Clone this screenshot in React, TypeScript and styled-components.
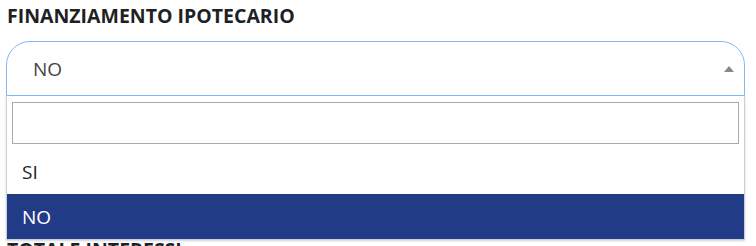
import React from 'react';
import styled, { createGlobalStyle } from 'styled-components';

const GlobalStyle = createGlobalStyle`
  body {
    margin: 0;
    background: #ffffff;
    font-family: 'Open Sans', 'Noto Sans', sans-serif;
    overflow: hidden;
  }
`;

const Page = styled.div`
  padding: 4px 11px 0 6px;
`;

const Field = styled.div<{ $gap?: number }>`
  position: relative;
  margin-bottom: ${(p) => p.$gap ?? 0}px;
`;

const Label = styled.div`
  font-size: 19.5px;
  font-weight: 700;
  line-height: 24px;
  color: #1f1f24;
  padding-left: 1px;
  margin-bottom: 13px;
`;

const SelectBox = styled.div`
  position: relative;
  height: 55px;
  box-sizing: border-box;
  border: 1px solid #7fbaf5;
  border-radius: 24px 24px 0 0;
  display: flex;
  align-items: center;
  padding-left: 26px;
  font-size: 19px;
  color: #444;
`;

const Arrow = styled.span`
  position: absolute;
  right: 10px;
  top: 50%;
  margin-top: -3px;
  width: 0;
  height: 0;
  border-left: 5px solid transparent;
  border-right: 5px solid transparent;
  border-bottom: 6px solid #888;
`;

const Dropdown = styled.div`
  position: absolute;
  left: -1px;
  right: -1px;
  top: calc(100% + 1px);
  z-index: 5;
  background: #fff;
  border: 1px solid #c8d1dc;
  border-top: none;
  box-shadow: 0 1px 2px rgba(60, 80, 110, 0.25);
`;

const SearchWrap = styled.div`
  padding: 6px 5px 5px;
`;

const Search = styled.input`
  display: block;
  width: 100%;
  box-sizing: border-box;
  height: 42px;
  border: 1px solid #aaa;
  outline: none;
  font: inherit;
`;

const Option = styled.div<{ $active?: boolean }>`
  height: 45px;
  display: flex;
  align-items: center;
  padding-left: 15px;
  font-size: 19px;
  color: ${(p) => (p.$active ? '#ffffff' : '#222')};
  background: ${(p) => (p.$active ? '#213b87' : 'transparent')};
`;

export default function App() {
  return (
    <>
      <GlobalStyle />
      <Page>
        <Field $gap={142}>
          <Label>FINANZIAMENTO IPOTECARIO</Label>
          <SelectBox>
            NO
            <Arrow />
            <Dropdown>
              <SearchWrap>
                <Search type="text" />
              </SearchWrap>
              <Option>SI</Option>
              <Option $active>NO</Option>
            </Dropdown>
          </SelectBox>
        </Field>
        <Field>
          <Label>TOTALE INTERESSI</Label>
        </Field>
      </Page>
    </>
  );
}
